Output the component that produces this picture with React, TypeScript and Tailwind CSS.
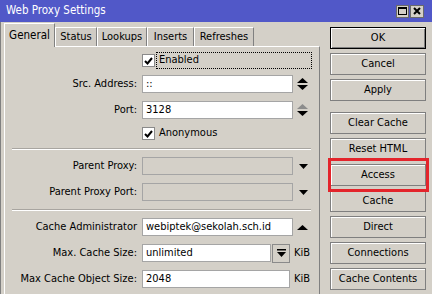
import React from "react";

const Spin = ({ upGray = false }: { upGray?: boolean }) => (
  <svg width="11" height="12" viewBox="0 0 11 12" className="block">
    <polygon points="0,5 5.5,0 11,5" fill={upGray ? "#8c8c8c" : "#000"} />
    <polygon points="0,7 11,7 5.5,12" fill="#000" />
  </svg>
);
const Down = () => (
  <svg width="9" height="5" viewBox="0 0 9 5" className="block">
    <polygon points="0,0 9,0 4.5,5" fill="#000" />
  </svg>
);
const Up = () => (
  <svg width="11" height="5" viewBox="0 0 11 5" className="block">
    <polygon points="0,5 5.5,0 11,5" fill="#000" />
  </svg>
);
const Check = () => (
  <div className="w-[13px] h-[13px] bg-white border border-[#8a8a8a] flex items-center justify-center">
    <svg width="9" height="8" viewBox="0 0 9 8">
      <path d="M1 4 L3.5 6.5 L8 1" stroke="#000" strokeWidth="2" fill="none" />
    </svg>
  </div>
);

const Label = ({ t }: { t: string }) => (
  <div className="w-[132px] text-right whitespace-nowrap">{t}</div>
);

const Input = ({ v, w, disabled = false }: { v: string; w: string; disabled?: boolean }) => (
  <div
    className={`${w} h-[18px] border border-[#a5a5a5] flex items-center pl-[3px] whitespace-nowrap overflow-hidden ${
      disabled ? "bg-[#d4d0c8]" : "bg-white"
    }`}
  >
    {v}
  </div>
);

const Btn = ({ t, def = false }: { t: string; def?: boolean }) => (
  <div
    className={`h-[22px] w-[96px] flex items-center justify-center ${
      def
        ? "border border-black shadow-[inset_1px_1px_0_#fff,inset_-1px_-1px_0_#808080]"
        : "border border-[#7f7f7f] shadow-[inset_1px_1px_0_#fff]"
    }`}
  >
    {t}
  </div>
);

const Sep = ({ mt }: { mt: string }) => (
  <div className={`${mt} ml-[7px] w-[299px] h-[2px] border-t border-[#a8a5a0] border-b border-b-white`} />
);

export default function App() {
  return (
    <div className="w-[432px] h-[294px] bg-[#d4d0c8] flex flex-col overflow-hidden relative text-[11px] text-black font-['DejaVu_Sans_Condensed','DejaVu_Sans',sans-serif] font-stretch-condensed">
      {/* title bar */}
      <div className="h-[22px] bg-[#5158c8] flex items-center pl-[6px] pr-[8px] text-white text-[11.5px]">
        <span className="flex-1">Web Proxy Settings</span>
        <div className="flex gap-[1px]">
          <div className="w-[13px] h-[13px] bg-[#d4d0c8] border border-[#6a6a6a] flex items-center justify-center">
            <div className="w-[9px] h-[8px] border border-black border-t-2" />
          </div>
          <div className="w-[14px] h-[13px] bg-[#d4d0c8] border border-[#6a6a6a] flex items-center justify-center">
            <svg width="8" height="8" viewBox="0 0 8 8">
              <path d="M1 1 L7 7 M7 1 L1 7" stroke="#000" strokeWidth="2" />
            </svg>
          </div>
        </div>
      </div>

      <div className="flex-1 flex border-l border-l-[#808080]">
        {/* left: tabs + panel */}
        <div className="ml-[3px] w-[316px] flex flex-col pt-[1px]">
          <div className="h-[23px] flex items-end">
            <div className="h-[24px] w-[51px] bg-[#d4d0c8] border-t border-l border-white border-r border-r-[#808080] flex items-center justify-center relative z-10 -mb-[1px] text-[11.5px]">
              General
            </div>
            {[
              ["Status", "w-[42px]"],
              ["Lookups", "w-[50px]"],
              ["Inserts", "w-[47px]"],
              ["Refreshes", "w-[60px]"],
            ].map(([t, w]) => (
              <div
                key={t}
                className={`${w} h-[19px] bg-[#cfcbc4] border-t border-l border-white border-r border-r-[#808080] flex items-center justify-center`}
              >
                {t}
              </div>
            ))}
          </div>
          <div className="flex-1 border-t border-l border-white border-r border-r-[#808080] flex flex-col">
            {/* Enabled */}
            <div className="mt-[5px] h-[17px] flex items-center">
              <div className="w-[137px]" />
              <Check />
              <div className="ml-[1px] w-[156px] h-[17px] border border-dotted border-black flex items-center pl-[2px]">
                Enabled
              </div>
            </div>
            {/* Src */}
            <div className="mt-[6px] h-[18px] flex items-center">
              <Label t="Src. Address:" />
              <div className="ml-[5px]">
                <Input v="::" w="w-[151px]" />
              </div>
              <div className="ml-[4px]">
                <Spin />
              </div>
            </div>
            {/* Port */}
            <div className="mt-[8px] h-[18px] flex items-center">
              <Label t="Port:" />
              <div className="ml-[5px]">
                <Input v="3128" w="w-[151px]" />
              </div>
              <div className="ml-[4px]">
                <Spin upGray />
              </div>
            </div>
            {/* Anonymous */}
            <div className="mt-[8px] h-[13px] flex items-center">
              <div className="w-[137px]" />
              <Check />
              <div className="ml-[4px]">Anonymous</div>
            </div>
            <Sep mt="mt-[8px]" />
            <div className="mt-[7px] h-[18px] flex items-center">
              <Label t="Parent Proxy:" />
              <div className="ml-[5px]">
                <Input v="" w="w-[151px]" disabled />
              </div>
              <div className="ml-[6px]">
                <Down />
              </div>
            </div>
            <div className="mt-[8px] h-[18px] flex items-center">
              <Label t="Parent Proxy Port:" />
              <div className="ml-[5px]">
                <Input v="" w="w-[151px]" disabled />
              </div>
              <div className="ml-[6px]">
                <Down />
              </div>
            </div>
            <Sep mt="mt-[8px]" />
            <div className="mt-[7px] h-[18px] flex items-center">
              <Label t="Cache Administrator" />
              <div className="ml-[5px]">
                <Input v="webiptek@sekolah.sch.id" w="w-[151px]" />
              </div>
              <div className="ml-[4px]">
                <Up />
              </div>
            </div>
            <div className="mt-[8px] h-[18px] flex items-center">
              <Label t="Max. Cache Size:" />
              <div className="ml-[5px]">
                <Input v="unlimited" w="w-[129px]" />
              </div>
              <div className="ml-[1px] w-[18px] h-[19px] border border-[#8a8a8a] bg-[#d4d0c8] flex items-center justify-center">
                <svg width="9" height="8" viewBox="0 0 9 8">
                  <rect x="0" y="0" width="9" height="1.5" fill="#000" />
                  <polygon points="0,3 9,3 4.5,8" fill="#000" />
                </svg>
              </div>
              <div className="ml-[4px]">KiB</div>
            </div>
            <div className="mt-[8px] h-[18px] flex items-center">
              <Label t="Max Cache Object Size:" />
              <div className="ml-[5px]">
                <Input v="2048" w="w-[148px]" />
              </div>
              <div className="ml-[4px]">KiB</div>
            </div>
          </div>
        </div>

        {/* right buttons */}
        <div className="ml-[10px] pt-[5px] flex flex-col">
          <div className="flex flex-col gap-[4px]">
            <Btn t="OK" def />
            <Btn t="Cancel" />
            <Btn t="Apply" />
          </div>
          <div className="mt-[11px] flex flex-col gap-[4px]">
            <Btn t="Clear Cache" />
            <Btn t="Reset HTML" />
            <Btn t="Access" />
            <Btn t="Cache" />
            <Btn t="Direct" />
            <Btn t="Connections" />
            <Btn t="Cache Contents" />
          </div>
        </div>
      </div>

      {/* red highlight */}
      <div className="absolute left-[328px] top-[158px] w-[101px] h-[34px] border-[3px] border-[#e3242b]" />
    </div>
  );
}
